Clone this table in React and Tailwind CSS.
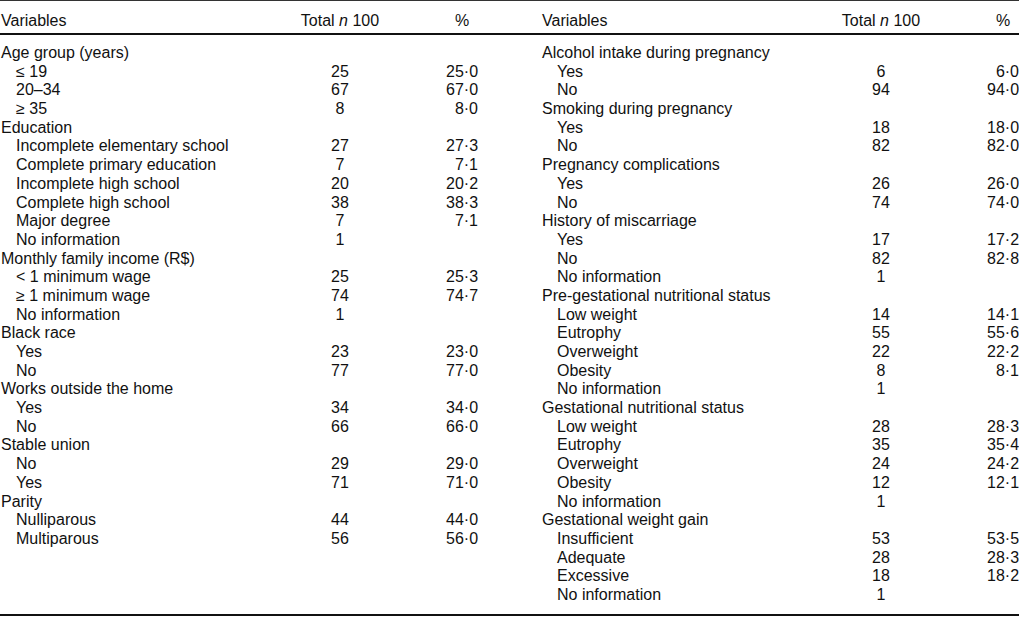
import React from 'react';

const left = [
  { label: 'Age group (years)' },
  { label: '≤ 19', n: '25', pct: '25·0', sub: true },
  { label: '20–34', n: '67', pct: '67·0', sub: true },
  { label: '≥ 35', n: '8', pct: '8·0', sub: true },
  { label: 'Education' },
  { label: 'Incomplete elementary school', n: '27', pct: '27·3', sub: true },
  { label: 'Complete primary education', n: '7', pct: '7·1', sub: true },
  { label: 'Incomplete high school', n: '20', pct: '20·2', sub: true },
  { label: 'Complete high school', n: '38', pct: '38·3', sub: true },
  { label: 'Major degree', n: '7', pct: '7·1', sub: true },
  { label: 'No information', n: '1', sub: true },
  { label: 'Monthly family income (R$)' },
  { label: '< 1 minimum wage', n: '25', pct: '25·3', sub: true },
  { label: '≥ 1 minimum wage', n: '74', pct: '74·7', sub: true },
  { label: 'No information', n: '1', sub: true },
  { label: 'Black race' },
  { label: 'Yes', n: '23', pct: '23·0', sub: true },
  { label: 'No', n: '77', pct: '77·0', sub: true },
  { label: 'Works outside the home' },
  { label: 'Yes', n: '34', pct: '34·0', sub: true },
  { label: 'No', n: '66', pct: '66·0', sub: true },
  { label: 'Stable union' },
  { label: 'No', n: '29', pct: '29·0', sub: true },
  { label: 'Yes', n: '71', pct: '71·0', sub: true },
  { label: 'Parity' },
  { label: 'Nulliparous', n: '44', pct: '44·0', sub: true },
  { label: 'Multiparous', n: '56', pct: '56·0', sub: true },
];

const right = [
  { label: 'Alcohol intake during pregnancy' },
  { label: 'Yes', n: '6', pct: '6·0', sub: true },
  { label: 'No', n: '94', pct: '94·0', sub: true },
  { label: 'Smoking during pregnancy' },
  { label: 'Yes', n: '18', pct: '18·0', sub: true },
  { label: 'No', n: '82', pct: '82·0', sub: true },
  { label: 'Pregnancy complications' },
  { label: 'Yes', n: '26', pct: '26·0', sub: true },
  { label: 'No', n: '74', pct: '74·0', sub: true },
  { label: 'History of miscarriage' },
  { label: 'Yes', n: '17', pct: '17·2', sub: true },
  { label: 'No', n: '82', pct: '82·8', sub: true },
  { label: 'No information', n: '1', sub: true },
  { label: 'Pre-gestational nutritional status' },
  { label: 'Low weight', n: '14', pct: '14·1', sub: true },
  { label: 'Eutrophy', n: '55', pct: '55·6', sub: true },
  { label: 'Overweight', n: '22', pct: '22·2', sub: true },
  { label: 'Obesity', n: '8', pct: '8·1', sub: true },
  { label: 'No information', n: '1', sub: true },
  { label: 'Gestational nutritional status' },
  { label: 'Low weight', n: '28', pct: '28·3', sub: true },
  { label: 'Eutrophy', n: '35', pct: '35·4', sub: true },
  { label: 'Overweight', n: '24', pct: '24·2', sub: true },
  { label: 'Obesity', n: '12', pct: '12·1', sub: true },
  { label: 'No information', n: '1', sub: true },
  { label: 'Gestational weight gain' },
  { label: 'Insufficient', n: '53', pct: '53·5', sub: true },
  { label: 'Adequate', n: '28', pct: '28·3', sub: true },
  { label: 'Excessive', n: '18', pct: '18·2', sub: true },
  { label: 'No information', n: '1', sub: true },
];

function HeaderCols() {
  return (
    <div className="grid w-[477px] grid-cols-[299px_80px_66px_32px]">
      <div>Variables</div>
      <div className="whitespace-nowrap text-center">
        Total <i>n</i> 100
      </div>
      <div />
      <div className="text-center">%</div>
    </div>
  );
}

function Column({ rows }) {
  return (
    <div className="w-[477px]">
      {rows.map((r, i) => (
        <div key={i} className="grid h-[18.7px] grid-cols-[299px_80px_66px_32px] leading-[18.7px]">
          <div className={r.sub ? 'whitespace-nowrap pl-[15px]' : 'whitespace-nowrap'}>{r.label}</div>
          <div className="text-center">{r.n}</div>
          <div />
          <div className="whitespace-nowrap text-right">{r.pct}</div>
        </div>
      ))}
    </div>
  );
}

export default function App() {
  return (
    <div className="h-[617px] w-[1019px] bg-white font-['Liberation_Sans',Arial,sans-serif] text-[16px] text-[#111]">
      <div className="border-t border-b-2 border-t-[#333] border-b-[#111]">
        <div className="flex h-[34px] gap-[64px] pl-[1px] pt-[11px] leading-[18.7px] border-b-2 border-[#111]">
          <HeaderCols />
          <HeaderCols />
        </div>
        <div className="flex gap-[64px] pl-[1px] pt-[9px] pb-[9px]">
          <Column rows={left} />
          <Column rows={right} />
        </div>
      </div>
    </div>
  );
}
